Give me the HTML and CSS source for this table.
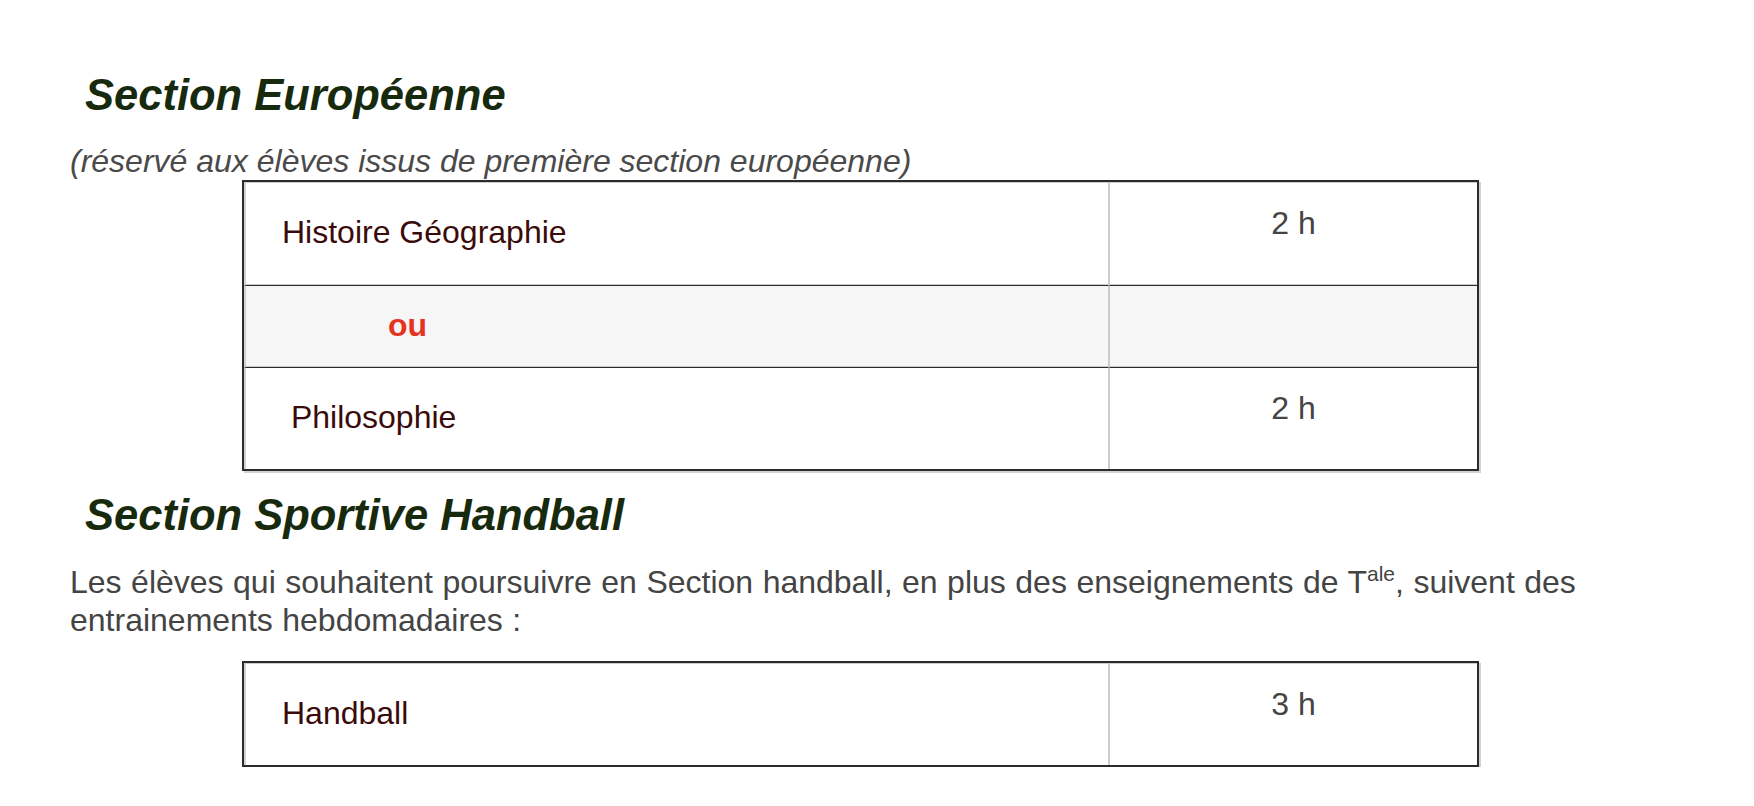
FILE: index.html
```html
<!DOCTYPE html>
<html lang="fr">
<head>
<meta charset="utf-8">
<title>Sections</title>
<link rel="stylesheet" href="styles.css">
</head>
<body>
<div class="page">
  <h2 class="section-title">Section Européenne</h2>
  <p class="note">(réservé aux élèves issus de première section européenne)</p>
  <table class="hours">
    <tr>
      <td class="subject">Histoire Géographie</td>
      <td class="amount">2 h</td>
    </tr>
    <tr class="alt">
      <td class="subject"><span class="or">ou</span></td>
      <td class="amount"></td>
    </tr>
    <tr>
      <td class="subject">&nbsp;Philosophie</td>
      <td class="amount">2 h</td>
    </tr>
  </table>

  <h2 class="section-title second">Section Sportive Handball</h2>
  <p class="text">Les élèves qui souhaitent poursuivre en Section handball, en plus des enseignements de T<sup>ale</sup>, suivent des entrainements hebdomadaires :</p>
  <table class="hours last">
    <tr>
      <td class="subject">Handball</td>
      <td class="amount">3 h</td>
    </tr>
  </table>
</div>
</body>
</html>
```
FILE: styles.css
```css
html, body {
  margin: 0;
  padding: 0;
  background: #ffffff;
}

body {
  font-family: "Liberation Sans", Arial, Helvetica, sans-serif;
  color: #444444;
}

.page {
  width: 1581px;
  margin-left: 70px;
  padding-top: 70px;
}

.section-title {
  margin: 0;
  padding-left: 15px;
  font-size: 43.5px;
  line-height: 50px;
  font-weight: bold;
  font-style: italic;
  color: #182a0e;
}

.section-title.second {
  margin-top: 19px;
}

.note {
  margin: 23px 0 0;
  font-size: 32px;
  line-height: 37px;
  font-style: italic;
  color: #4a4a4a;
}

.text {
  margin: 23px 0 0;
  font-size: 32px;
  line-height: 38px;
  word-spacing: 0.6px;
  color: #444444;
}

.text sup {
  font-size: 21px;
  line-height: 0;
  vertical-align: 12px;
}

.hours {
  box-sizing: border-box;
  width: 1237px;
  margin: 0 auto;
  border: 2px solid #2b2b2b;
  border-spacing: 0;
  table-layout: fixed;
  box-shadow: 2px 2px 0 #d2d2d2;
  font-size: 32px;
  line-height: 37px;
}

.hours.last {
  margin-top: 22px;
}

.hours td {
  box-sizing: border-box;
  padding: 0;
  border-top: 1px solid #cccccc;
}

.hours tr + tr td {
  border-top: 1px solid #2b2b2b;
}

.hours tr:not(:last-child) td {
  border-bottom: 1px solid #cccccc;
}

.hours .subject {
  width: 865px;
  padding: 31px 0 33px 36px;
  border-left: 2px solid #d2d2d2;
  border-right: 1px solid #cccccc;
  vertical-align: middle;
  color: #3b0b0b;
}

.hours .alt td {
  background: #f6f6f6;
}

.hours .alt .subject {
  padding-top: 21px;
  padding-bottom: 22px;
}

.hours .amount {
  padding-top: 22px;
  border-left: 1px solid #cccccc;
  vertical-align: top;
  text-align: center;
  color: #444444;
}

.or {
  margin-left: 106px;
  font-weight: bold;
  color: #e5331f;
}
```
